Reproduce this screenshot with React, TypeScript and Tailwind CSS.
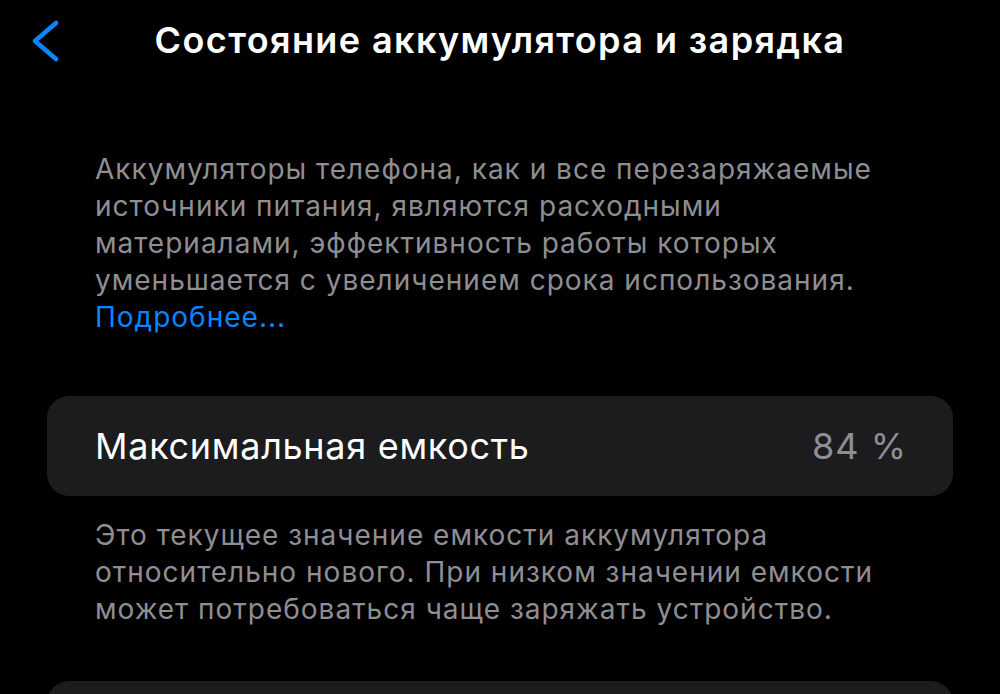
const font = { fontFamily: 'Inter, "Noto Sans", sans-serif' };

export default function App() {
    return (
        <div className="min-h-screen w-full bg-black text-white overflow-hidden" style={font}>
            {/* Nav bar */}
            <div className="relative flex h-[80px] items-center justify-center">
                <button className="absolute left-[30px] top-[19px] text-[#0a84ff]">
                    <svg width="30" height="44" viewBox="0 0 30 44" fill="none">
                        <path d="M26 4 L5 22 L26 40" stroke="currentColor" strokeWidth="4.6" strokeLinecap="round" strokeLinejoin="round" />
                    </svg>
                </button>
                <h1 className="text-[36px] font-semibold tracking-[1.4px] leading-none">
                    Состояние аккумулятора и зарядка
                </h1>
            </div>

            {/* Header description */}
            <div className="mt-[71px] px-[95px] text-[28px] leading-[37px] text-[#8e8e93] tracking-[1px]">
                <p>
                    Аккумуляторы телефона, как и все перезаряжаемые<br />
                    источники питания, являются расходными<br />
                    материалами, эффективность работы которых<br />
                    уменьшается с увеличением срока использования.
                </p>
                <a className="text-[#0a84ff]">Подробнее...</a>
            </div>

            {/* Max capacity */}
            <div className="mx-[47px] mt-[60px] flex h-[100px] items-center justify-between rounded-[22px] bg-[#1c1c1e] pl-[48px] pr-[46px]">
                <span className="text-[36px] tracking-[0.7px]">Максимальная емкость</span>
                <span className="text-[36px] tracking-[1px] text-[#8e8e93]">84 %</span>
            </div>

            <div className="mt-[21px] px-[95px] text-[28px] leading-[37px] text-[#8e8e93] tracking-[1px]">
                <p>
                    Это текущее значение емкости аккумулятора<br />
                    относительно нового. При низком значении емкости<br />
                    может потребоваться чаще заряжать устройство.
                </p>
            </div>

            {/* Next group */}
            <div className="mx-[47px] mt-[53px] h-[100px] rounded-[22px] bg-[#1c1c1e]" />
        </div>
    );
}
